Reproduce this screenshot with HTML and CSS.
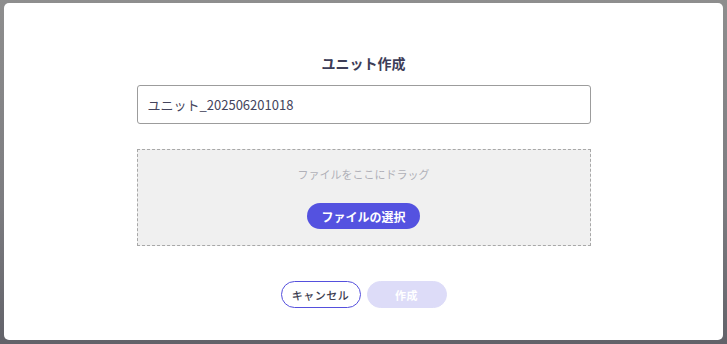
FILE: index.html
```html
<!DOCTYPE html>
<html lang="ja">
<head>
<meta charset="utf-8">
<link rel="stylesheet" href="styles.css">
</head>
<body>
<div class="backdrop">
  <div class="modal">
    <h1 class="title">ユニット作成</h1>
    <div class="field">
      <input class="name-input" type="text" value="ユニット_202506201018">
    </div>
    <div class="dropzone">
      <p class="drop-text">ファイルをここにドラッグ</p>
      <button class="select-btn" type="button">ファイルの選択</button>
    </div>
    <div class="actions">
      <button class="btn btn-cancel" type="button">キャンセル</button>
      <button class="btn btn-create" type="button" disabled>作成</button>
    </div>
  </div>
</div>
</body>
</html>
```
FILE: styles.css
```css
* { box-sizing: border-box; }
html, body { margin: 0; padding: 0; }
body {
  width: 727px;
  height: 344px;
  overflow: hidden;
  font-family: "Noto Sans CJK JP", "Noto Sans", sans-serif;
}
.backdrop {
  width: 727px;
  height: 344px;
  padding: 3px 4px;
  background: linear-gradient(180deg, #8e8e8e 0%, #7c7c80 60%, #626269 100%);
}
.modal {
  width: 719px;
  height: 337px;
  background: #fff;
  border-radius: 5px;
  display: flex;
  flex-direction: column;
  align-items: center;
  padding-top: 50px;
}
.title {
  margin: 0;
  font-size: 14px;
  line-height: 20px;
  font-weight: 700;
  color: #3d3d58;
}
.field { margin-top: 12px; }
.name-input {
  display: block;
  width: 454px;
  height: 39px;
  border: 1px solid #9c9c9c;
  border-radius: 3px;
  padding: 0 10px;
  font-family: inherit;
  font-size: 13px;
  color: #44445c;
  background: #fff;
  outline: none;
}
.dropzone {
  margin-top: 25px;
  width: 454px;
  height: 97px;
  border: 1px dashed #a8a8a8;
  background: #f0f0f0;
  display: flex;
  flex-direction: column;
  align-items: center;
  padding-top: 15px;
}
.drop-text {
  margin: 0;
  font-size: 11px;
  line-height: 18px;
  color: #b0b0b8;
}
.select-btn {
  margin-top: 20px;
  width: 113px;
  height: 26px;
  border: none;
  border-radius: 13px;
  background: #5452e0;
  color: #fff;
  font-family: inherit;
  font-size: 12px;
  font-weight: 700;
  padding: 0;
}
.actions {
  margin-top: 35px;
  display: flex;
  gap: 6px;
}
.btn {
  width: 80px;
  height: 27px;
  border-radius: 14px;
  font-family: inherit;
  font-size: 11px;
  font-weight: 500;
  letter-spacing: 0.5px;
  padding: 0;
}
.btn-cancel {
  background: #fff;
  border: 1px solid #5550dd;
  color: #3d3d50;
}
.btn-create {
  background: #dddcf8;
  border: 1px solid #dddcf8;
  color: #fff;
  font-weight: 700;
}
```
